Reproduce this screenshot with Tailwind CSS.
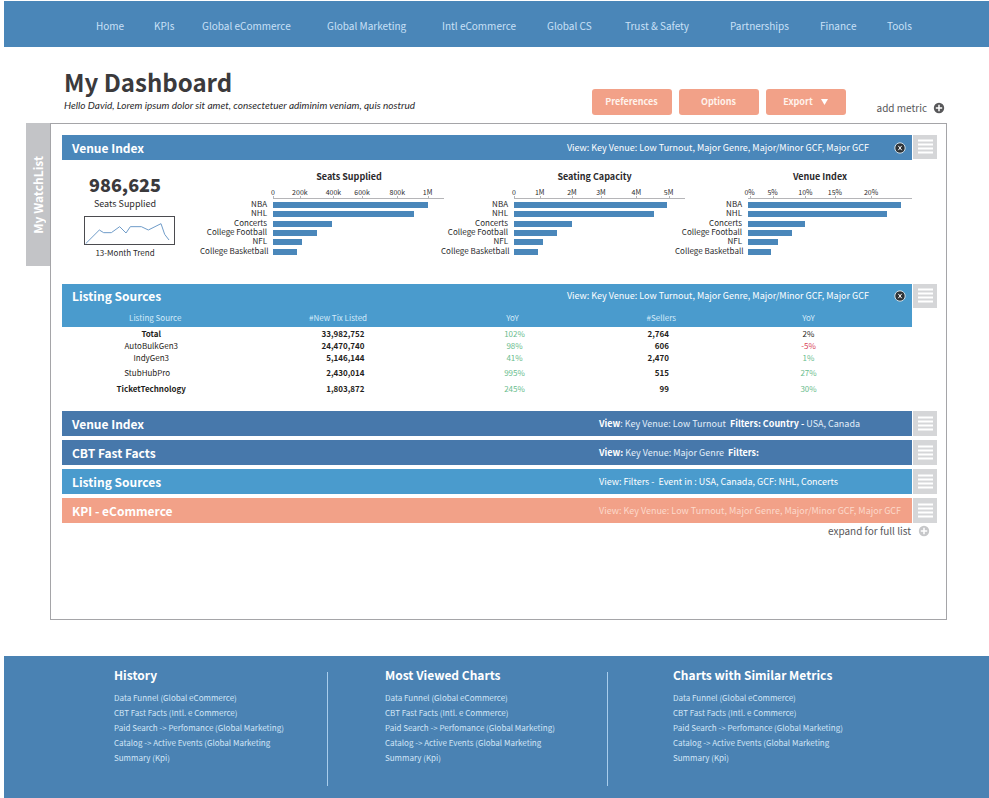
<!DOCTYPE html>
<html lang="en">
<head>
<meta charset="utf-8">
<meta name="viewport" content="width=device-width, initial-scale=1">
<title>My Dashboard</title>
<script src="https://cdn.jsdelivr.net/npm/@tailwindcss/browser@4"></script>
</head>
<body class="flex min-h-screen flex-col bg-white font-['Noto_Sans_CJK_SC','Noto_Sans',sans-serif] text-[#2b2a2c]">
<svg class="hidden">
  <symbol id="menu" viewBox="0 0 24 24"><path d="M5 5.500h15M5 9.500h15M5 13.500h15M5 17.500h15" stroke="#fff" stroke-width="1.800"/></symbol>
  <symbol id="plus" viewBox="0 0 12 12"><circle cx="6" cy="6" r="5.200" fill="currentColor"/><path d="M6 2.800v6.400M2.800 6h6.400" stroke="#fff" stroke-width="1.500"/></symbol>
  <symbol id="close" viewBox="0 0 12 12"><circle cx="6" cy="6" r="5.200" fill="#2d3236" stroke="#cfe0ea" stroke-width="1"/><path d="M4.300 3.800l3.400 4.400M7.700 3.800L4.300 8.200" stroke="#fff" stroke-width="1"/></symbol>
</svg>

<nav class="mt-px ml-1 h-[46px] bg-[#4a86b8] pt-4 pr-[74px] pl-[92px] text-[10px] leading-[18px] text-[#c9e0f7]">
  <ul class="grid grid-cols-[58fr_48fr_125fr_115fr_105fr_78fr_105fr_90fr_67fr_28fr] whitespace-nowrap">
    <li><a href="#">Home</a></li>
    <li><a href="#">KPIs</a></li>
    <li><a href="#">Global eCommerce</a></li>
    <li><a href="#">Global Marketing</a></li>
    <li><a href="#">Intl eCommerce</a></li>
    <li><a href="#">Global CS</a></li>
    <li><a href="#">Trust &amp; Safety</a></li>
    <li><a href="#">Partnerships</a></li>
    <li><a href="#">Finance</a></li>
    <li><a href="#">Tools</a></li>
  </ul>
</nav>

<header class="flex items-end pt-[19px] pr-11 pb-2 pl-16">
  <div class="flex-1 whitespace-nowrap pb-[3px]">
    <h1 class="text-[24px] leading-8 font-bold text-[#3b3a3c]">My Dashboard</h1>
    <p class="font-['Lato','Noto_Sans',sans-serif] text-[10px] leading-[14px] italic">Hello David, Lorem ipsum dolor sit amet, consectetuer adiminim veniam, quis nostrud</p>
  </div>
  <div class="flex gap-[7px] text-[9px] font-bold text-[#fff3ec]">
    <button class="h-[26px] w-20 rounded-[3px] bg-[#f2a188]">Preferences</button>
    <button class="h-[26px] w-20 rounded-[3px] bg-[#f2a188]">Options</button>
    <button class="flex h-[26px] w-20 items-center justify-center gap-2 rounded-[3px] bg-[#f2a188]">Export <svg class="h-[6px] w-[7px]" viewBox="0 0 7 6"><path d="M0 0h7L3.500 6z" fill="#fff"/></svg></button>
  </div>
  <button class="ml-[31px] flex items-center gap-[6px] text-[10px] leading-[14px] text-[#58585a]">add metric <svg class="size-3"><use href="#plus"/></svg></button>
</header>

<main class="mr-[42px] ml-[26px] flex flex-1 items-stretch">
  <button class="flex h-[143px] w-6 items-center justify-center self-start bg-[#c3c4c7] text-[12px] font-bold text-white"><span class="rotate-180 [writing-mode:vertical-rl]">My WatchList</span></button>
  <div class="flex-1 border border-[#a5a5a8] pt-[11px] pr-[9px] pb-20 pl-[11px]">

    <section>
      <div class="flex items-start gap-px">
        <div class="flex h-[25px] flex-1 items-center bg-[#4a87ba] pr-[6px] pl-[10px] text-white">
          <h2 class="flex-1 text-[12px] font-bold">Venue Index</h2>
          <p class="text-[9px]">View: Key Venue: Low Turnout, Major Genre, Major/Minor GCF, Major GCF</p>
          <button class="ml-[25px]" aria-label="Close"><svg class="size-3"><use href="#close"/></svg></button>
        </div>
        <button class="h-6 w-6 bg-[#d5d6d8]" aria-label="Menu"><svg class="size-6"><use href="#menu"/></svg></button>
      </div>
      <div class="mr-[25px] grid h-[124px] grid-cols-[138fr_241fr_234fr_237fr]">
        <div class="flex w-[126px] flex-col items-center pt-3">
          <strong class="text-[18px] leading-6 font-black text-[#3b3a3c]">986,625</strong>
          <span class="text-[9px] leading-4">Seats Supplied</span>
          <svg class="mt-1 ml-2 h-[29px] w-[91px]" viewBox="0 0 273 87"><rect x="1.500" y="1.500" width="270" height="84" fill="none" stroke="#4b4b4f" stroke-width="3"/><path d="M5 83L46 42L59 50H82L107 32L126 51L139 32H172L193 42L231 23L242 55L255 72" fill="none" stroke="#6f9cc9" stroke-width="3"/></svg>
          <span class="text-[8px] leading-4">13-Month Trend</span>
        </div>
        <div data-chart="0"></div>
        <div data-chart="1"></div>
        <div data-chart="2"></div>
      </div>
    </section>

    <section class="flex items-start gap-px">
      <div class="flex-1">
        <div class="flex h-6 items-center bg-[#4a9bcd] pr-[6px] pl-[10px] text-white">
          <h2 class="flex-1 text-[12px] font-bold">Listing Sources</h2>
          <p class="text-[9px]">View: Key Venue: Low Turnout, Major Genre, Major/Minor GCF, Major GCF</p>
          <button class="ml-[25px]" aria-label="Close"><svg class="size-3"><use href="#close"/></svg></button>
        </div>
        <table class="w-full table-fixed text-center text-[8px] leading-[14px]">
          <colgroup><col class="w-[21%]"><col class="w-[22%]"><col class="w-[20%]"><col class="w-[15%]"><col class="w-[22%]"></colgroup>
          <thead class="bg-[#4a9bcd] text-[#d3eaf9]">
            <tr class="h-[19px]"><th class="pl-2 font-normal">Listing Source</th><th class="pl-2 font-normal">#New Tix Listed</th><th class="font-normal">YoY</th><th class="font-normal">#Sellers</th><th class="pr-5 font-normal">YoY</th></tr>
          </thead>
          <tbody class="text-[#6abd8e]">
            <tr class="h-[13px] leading-3"><td class="font-bold text-[#1f1e20]">Total</td><td class="pr-[63px] text-right font-bold text-[#1f1e20]">33,982,752</td><td class="pl-1">102%</td><td class="pr-14 text-right font-bold text-[#1f1e20]">2,764</td><td class="pr-5 text-[#1f1e20]">2%</td></tr>
            <tr class="h-3 leading-3"><td class="text-[#1f1e20]">AutoBulkGen3</td><td class="pr-[63px] text-right font-bold text-[#1f1e20]">24,470,740</td><td class="pl-1">98%</td><td class="pr-14 text-right font-bold text-[#1f1e20]">606</td><td class="pr-5 text-[#d9455a]">-5%</td></tr>
            <tr class="h-3 leading-3"><td class="text-[#1f1e20]">IndyGen3</td><td class="pr-[63px] text-right font-bold text-[#1f1e20]">5,146,144</td><td class="pl-1">41%</td><td class="pr-14 text-right font-bold text-[#1f1e20]">2,470</td><td class="pr-5">1%</td></tr>
            <tr class="h-[18px]"><td class="pr-2 text-[#1f1e20]">StubHubPro</td><td class="pr-[63px] text-right font-bold text-[#1f1e20]">2,430,014</td><td class="pl-1">995%</td><td class="pr-14 text-right font-bold text-[#1f1e20]">515</td><td class="pr-5">27%</td></tr>
            <tr class="h-3"><td class="font-bold text-[#1f1e20]">TicketTechnology</td><td class="pr-[63px] text-right font-bold text-[#1f1e20]">1,803,872</td><td class="pl-1">245%</td><td class="pr-14 text-right font-bold text-[#1f1e20]">99</td><td class="pr-5">30%</td></tr>
          </tbody>
        </table>
      </div>
      <button class="h-6 w-6 bg-[#d5d6d8]" aria-label="Menu"><svg class="size-6"><use href="#menu"/></svg></button>
    </section>

    <ul class="mt-[15px] flex flex-col gap-1 text-[9px] text-[#e3effa]">
      <li class="flex items-start gap-px">
        <div class="grid h-[25px] flex-1 grid-cols-[527fr_313fr] items-center bg-[#4778ab] pl-[10px]"><h2 class="text-[12px] font-bold text-white">Venue Index</h2><p class="whitespace-nowrap"><b class="text-white">View</b>: Key Venue: Low Turnout &nbsp;<b class="text-white">Filters: Country -</b> USA, Canada</p></div>
        <button class="h-[25px] w-6 bg-[#d5d6d8]" aria-label="Menu"><svg class="size-6"><use href="#menu"/></svg></button>
      </li>
      <li class="flex items-start gap-px">
        <div class="grid h-[25px] flex-1 grid-cols-[527fr_313fr] items-center bg-[#4778ab] pl-[10px]"><h2 class="text-[12px] font-bold text-white">CBT Fast Facts</h2><p class="whitespace-nowrap"><b class="text-white">View:</b> Key Venue: Major Genre &nbsp;<b class="text-white">Filters:</b></p></div>
        <button class="h-[25px] w-6 bg-[#d5d6d8]" aria-label="Menu"><svg class="size-6"><use href="#menu"/></svg></button>
      </li>
      <li class="flex items-start gap-px">
        <div class="grid h-[25px] flex-1 grid-cols-[527fr_313fr] items-center bg-[#4a9bcd] pl-[10px]"><h2 class="text-[12px] font-bold text-white">Listing Sources</h2><p class="whitespace-nowrap text-white">View: Filters - &nbsp;Event in : USA, Canada, GCF: NHL, Concerts</p></div>
        <button class="h-[25px] w-6 bg-[#d5d6d8]" aria-label="Menu"><svg class="size-6"><use href="#menu"/></svg></button>
      </li>
      <li class="flex items-start gap-px">
        <div class="grid h-[25px] flex-1 grid-cols-[527fr_313fr] items-center bg-[#f2a188] pl-[10px]"><h2 class="text-[12px] font-bold text-white">KPI - eCommerce</h2><p class="whitespace-nowrap text-[#fcd9cb]">View: Key Venue: Low Turnout, Major Genre, Major/Minor GCF, Major GCF</p></div>
        <button class="h-[25px] w-6 bg-[#d5d6d8]" aria-label="Menu"><svg class="size-6"><use href="#menu"/></svg></button>
      </li>
    </ul>
    <div class="flex justify-end pr-[7px]">
      <button class="flex items-center gap-[7px] text-[10px] leading-4 text-[#58585a]">expand for full list <svg class="size-3 text-[#c6c7c9]"><use href="#plus"/></svg></button>
    </div>
  </div>
</main>

<footer class="mt-9 ml-1 grid h-[143px] grid-cols-[324fr_280fr_381fr] bg-[#4a82b3] py-4 text-[8px] leading-[15px] whitespace-nowrap text-[#d3e6f7]">
  <section class="mb-[-3px] border-r border-[#a9cdec] pl-[110px]">
    <h2 class="-mt-1.5 mb-1.5 text-[12px] leading-[18px] font-bold text-white">History</h2>
    <ul>
      <li><a href="#">Data Funnel (Global eCommerce)</a></li>
      <li><a href="#">CBT Fast Facts (Intl. e Commerce)</a></li>
      <li><a href="#">Paid Search -&gt; Perfomance (Global Marketing)</a></li>
      <li><a href="#">Catalog -&gt; Active Events (Global Marketing</a></li>
      <li><a href="#">Summary (Kpi)</a></li>
    </ul>
  </section>
  <section class="mb-[-3px] border-r border-[#a9cdec] pl-[57px]">
    <h2 class="-mt-1.5 mb-1.5 text-[12px] leading-[18px] font-bold text-white">Most Viewed Charts</h2>
    <ul>
      <li><a href="#">Data Funnel (Global eCommerce)</a></li>
      <li><a href="#">CBT Fast Facts (Intl. e Commerce)</a></li>
      <li><a href="#">Paid Search -&gt; Perfomance (Global Marketing)</a></li>
      <li><a href="#">Catalog -&gt; Active Events (Global Marketing</a></li>
      <li><a href="#">Summary (Kpi)</a></li>
    </ul>
  </section>
  <section class="pl-[65px]">
    <h2 class="-mt-1.5 mb-1.5 text-[12px] leading-[18px] font-bold text-white">Charts with Similar Metrics</h2>
    <ul>
      <li><a href="#">Data Funnel (Global eCommerce)</a></li>
      <li><a href="#">CBT Fast Facts (Intl. e Commerce)</a></li>
      <li><a href="#">Paid Search -&gt; Perfomance (Global Marketing)</a></li>
      <li><a href="#">Catalog -&gt; Active Events (Global Marketing</a></li>
      <li><a href="#">Summary (Kpi)</a></li>
    </ul>
  </section>
</footer>

<script>
const labels = ['NBA', 'NHL', 'Concerts', 'College Football', 'NFL', 'College Basketball'];
// Tick positions, axis length and bar lengths are percentages of the plot width.
const charts = [
  { title: 'Seats Supplied', pad: 'pr-4', axis: 102, ticks: [['0', 0], ['200k', 16], ['400k', 36], ['600k', 53], ['800k', 74], ['1M', 92]], bars: [92, 84, 35, 26, 17.5, 14] },
  { title: 'Seating Capacity', pad: 'pr-0', axis: 106, ticks: [['0', 0], ['1M', 16], ['2M', 36], ['3M', 54], ['4M', 76], ['5M', 96]], bars: [95, 87, 36, 27, 18, 15] },
  { title: 'Venue Index', pad: 'pr-5', axis: 100, ticks: [['0%', 1], ['5%', 15], ['10%', 35], ['15%', 53], ['20%', 75]], bars: [93, 85, 35, 27, 18, 14] }
];
document.querySelectorAll('[data-chart]').forEach(el => {
  const c = charts[el.dataset.chart];
  el.innerHTML = `
    <div class="pt-2 text-[8px] leading-[7px] whitespace-nowrap">
      <h3 class="ml-[73px] ${c.pad} text-center text-[9px] leading-[18px] font-bold">${c.title}</h3>
      <div class="relative ml-[73px] h-[13px] text-[7px] leading-[9px]">
        ${c.ticks.map(t => `<span class="absolute bottom-[2px] -translate-x-1/2" style="left:${t[1]}%">${t[0]}</span><i class="absolute bottom-0 h-[3px] w-px bg-[#b5b5b8]" style="left:${t[1]}%"></i>`).join('')}
        <i class="absolute bottom-0 left-0 h-px bg-[#b5b5b8]" style="width:${c.axis}%"></i>
      </div>
      <ul class="grid h-[57px] auto-rows-fr pt-px">
        ${labels.map((l, i) => `<li class="flex"><span class="w-[67px] shrink-0 text-right">${l}</span><span class="ml-[6px] flex-1"><span class="mt-[2px] block h-[6px] bg-[#4a87ba]" style="width:${c.bars[i]}%"></span></span></li>`).join('')}
      </ul>
    </div>`;
});
</script>
</body>
</html>
